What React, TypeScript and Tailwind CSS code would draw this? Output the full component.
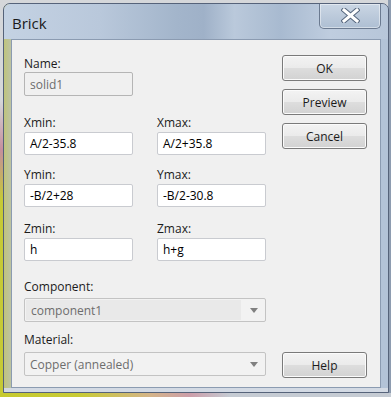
import React from "react";

const TextBox = ({ value, disabled }: { value: string; disabled?: boolean }) => (
  <div
    className={`h-[23px] rounded-[2px] border flex items-center pl-[5px] ${
      disabled ? "border-[#b5b5b5] bg-[#f0f0f0] text-[#6d6d6d]" : "border-[#c9cbd0] bg-white text-black"
    }`}
  >
    {value}
  </div>
);

const Combo = ({ value, shaded }: { value: string; shaded?: boolean }) => (
  <div className="h-[24px] rounded-[2px] border border-[#c3c3c3] bg-[#f2f2f2] flex items-stretch">
    <div
      className={`flex-1 flex items-center pl-[5px] text-[#6d6d6d] ${
        shaded ? "m-[1px] bg-[#e9e9e9]" : ""
      }`}
    >
      {value}
    </div>
    <div className="w-[23px] flex items-center justify-center">
      <div className="w-0 h-0 border-x-[4px] border-x-transparent border-t-[5px] border-t-[#808080]" />
    </div>
  </div>
);

const Button = ({ label }: { label: string }) => (
  <button className="h-[26px] w-full rounded-[3px] border border-[#7a7a7a] bg-[linear-gradient(180deg,#f3f3f3_0%,#ebebeb_48%,#dddddd_52%,#d2d2d2_100%)] shadow-[inset_0_0_0_1px_#fbfbfb] text-[#1b1b1b] flex items-center justify-center">
    {label}
  </button>
);

const fields = [
  { label: "Xmin:", value: "A/2-35.8", label2: "Xmax:", value2: "A/2+35.8", mt: "mt-[19px]" },
  { label: "Ymin:", value: "-B/2+28", label2: "Ymax:", value2: "-B/2-30.8", mt: "mt-[12px]" },
  { label: "Zmin:", value: "h", label2: "Zmax:", value2: "h+g", mt: "mt-[14px]" },
];

export default function App() {
  return (
    <div className="w-[391px] h-[397px] overflow-hidden flex flex-col font-['Open_Sans',sans-serif] text-[12px] leading-[15px] text-[#1b1b1b] bg-[linear-gradient(90deg,transparent_388px,#8e9cb0_388px),linear-gradient(180deg,#d5d7da_0px,#d5d7da_100px,#c58f9d_150px,#c6ca35_200px,#c6ca35_397px)]">
      {/* window */}
      <div className="ml-[3px] mt-[3px] w-[386px] h-[390px] shrink-0 rounded-t-[7px] border border-[#56637a] flex flex-col overflow-hidden bg-[linear-gradient(90deg,#c0c47c_0px,#bcc3a4_7px,#b6c5d8_14px,#b3c3d7_100%)]">
        {/* title bar */}
        <div className="h-[35px] shrink-0 flex justify-between bg-[linear-gradient(90deg,#c4d2e3_0%,#b9c8db_25%,#a3b5cb_45%,#9fb1c8_52%,#bac9db_60%,#a8bad0_72%,#bfcddf_85%,#b7c6d9_100%)]">
          <div className="pl-[8px] pt-[9px] text-[15px] leading-[20px] text-[#1a1a1a]">Brick</div>
          <div className="mr-[7px] w-[62px] h-[25px] rounded-b-[5px] border border-t-0 border-[#6b7a90] bg-[linear-gradient(180deg,#cad6e4_0%,#bccadb_50%,#aebfd3_100%)] shadow-[inset_0_0_0_1px_rgba(255,255,255,0.45)] flex items-center justify-center pb-[1px]">
            <svg width="19" height="15" viewBox="0 0 19 15">
              <path d="M3 2 L16 13 M16 2 L3 13" stroke="#56677e" strokeWidth="5" strokeLinecap="square" />
              <path d="M3 2 L16 13 M16 2 L3 13" stroke="#ffffff" strokeWidth="3" strokeLinecap="square" />
            </svg>
          </div>
        </div>

        {/* client area */}
        <div className="mx-[7px] h-[349px] shrink-0 border border-[#8b9bb1] bg-[#f0f0f0] flex pl-[12px] pr-[13px]">
          <div className="w-[242px] pt-[16px]">
            <div>Name:</div>
            <div className="mt-[1px] w-[109px]">
              <div className="h-[24px] rounded-[2px] border border-[#b5b5b5] bg-[#f0f0f0] text-[#6d6d6d] flex items-center pl-[5px]">
                solid1
              </div>
            </div>

            {fields.map((f) => (
              <div key={f.label} className={`grid grid-cols-2 gap-x-[24px] ${f.mt}`}>
                <div>
                  <div>{f.label}</div>
                  <div className="mt-[2px]">
                    <TextBox value={f.value} />
                  </div>
                </div>
                <div>
                  <div>{f.label2}</div>
                  <div className="mt-[2px]">
                    <TextBox value={f.value2} />
                  </div>
                </div>
              </div>
            ))}

            <div className="mt-[18px]">Component:</div>
            <div className="mt-[4px]">
              <Combo value="component1" shaded />
            </div>
            <div className="mt-[10px]">Material:</div>
            <div className="mt-[5px]">
              <Combo value="Copper (annealed)" />
            </div>
          </div>

          <div className="w-[85px] ml-[16px] pt-[15px] pb-[9px] flex flex-col gap-[8px]">
            <Button label="OK" />
            <Button label="Preview" />
            <Button label="Cancel" />
            <div className="mt-auto">
              <Button label="Help" />
            </div>
          </div>
        </div>

        <div className="flex-1 bg-[#d3dae4]" />
      </div>

      {/* desktop strip below */}
      <div className="h-[4px] shrink-0 bg-[linear-gradient(90deg,#c6ca2f_0px,#c8cb35_80px,#d4b489_150px,#cc9eaa_190px,#c5cbd3_230px,#c5cbd3_100%)]" />
    </div>
  );
}
